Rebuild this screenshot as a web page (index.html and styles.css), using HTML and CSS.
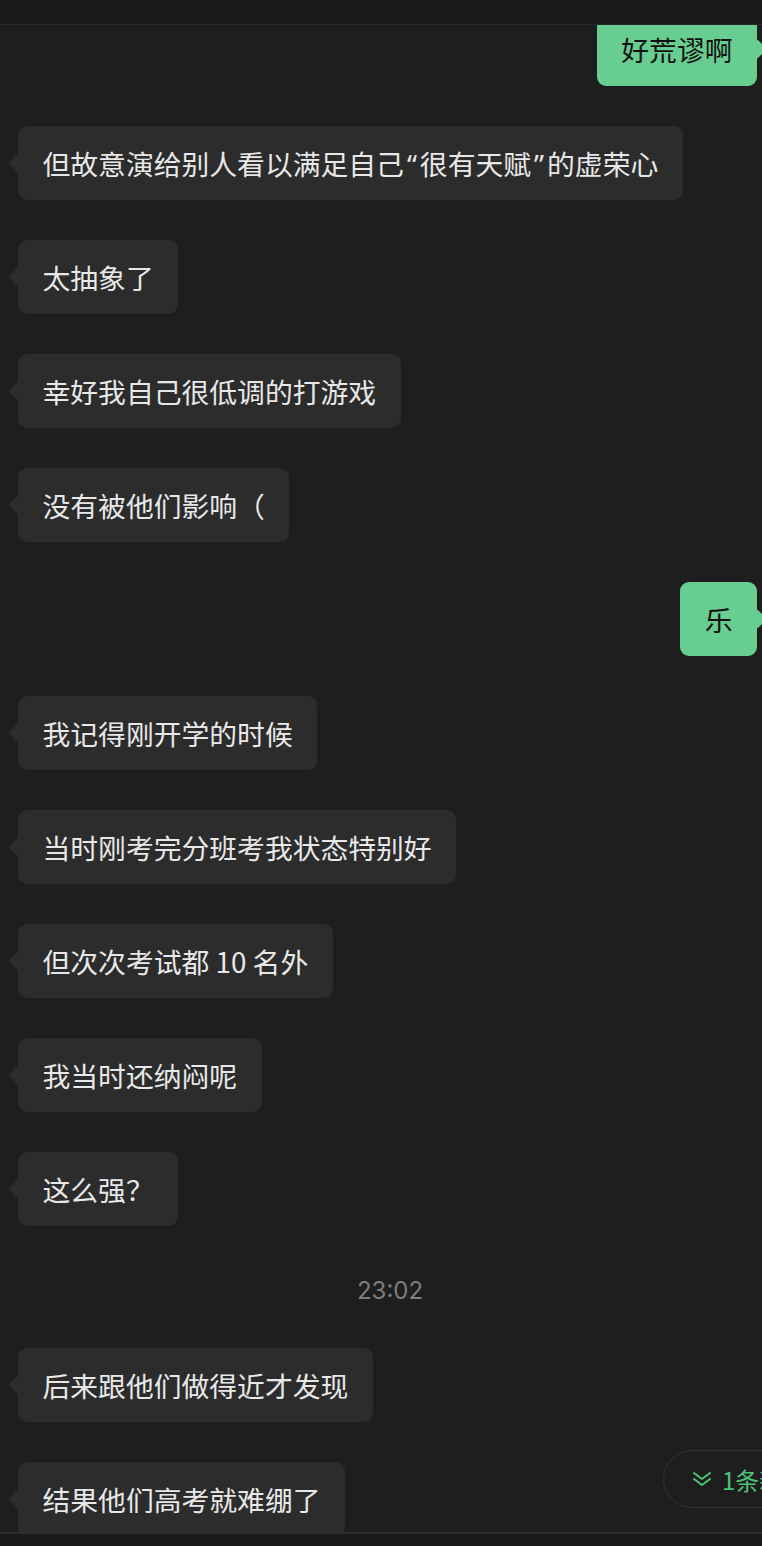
FILE: index.html
```html
<!DOCTYPE html>
<html lang="zh-CN">
<head>
  <meta charset="UTF-8">
  <meta name="viewport" content="width=device-width, initial-scale=1.0">
  <title>聊天记录</title>
  <link rel="stylesheet" href="styles.css">
</head>
<body>
  <div class="chat-window">
    <div class="top-bar"></div>

    <div class="chat-body">
      <div class="message-list">
        <div class="bubble mine">好荒谬啊</div>
        <div class="bubble theirs">但故意演给别人看以满足自己<span class="quote">“</span>很有天赋<span class="quote">”</span>的虚荣心</div>
        <div class="bubble theirs">太抽象了</div>
        <div class="bubble theirs">幸好我自己很低调的打游戏</div>
        <div class="bubble theirs">没有被他们影响（</div>
        <div class="bubble mine">乐</div>
        <div class="bubble theirs">我记得刚开学的时候</div>
        <div class="bubble theirs">当时刚考完分班考我状态特别好</div>
        <div class="bubble theirs">但次次考试都 10 名外</div>
        <div class="bubble theirs">我当时还纳闷呢</div>
        <div class="bubble theirs">这么强？</div>
        <div class="timestamp">23:02</div>
        <div class="bubble theirs">后来跟他们做得近才发现</div>
        <div class="bubble theirs">结果他们高考就难绷了</div>
      </div>

      <!-- new message hint -->
      <div class="new-hint">
        <svg class="hint-icon" viewBox="0 0 20 20" width="20" height="20">
          <path d="M2 4 L10 10 L18 4" fill="none" stroke="#4cc277" stroke-width="2" stroke-linecap="round" stroke-linejoin="round"/>
          <path d="M2 10 L10 16 L18 10" fill="none" stroke="#4cc277" stroke-width="2" stroke-linecap="round" stroke-linejoin="round"/>
        </svg>
        <span>1条新消息</span>
      </div>
    </div>

    <div class="bottom-bar"></div>
  </div>
</body>
</html>
```

FILE: styles.css
```css
/* Chat window */
body {
  margin: 0;
  background: #1b1b1b;
  font-family: "Noto Sans CJK SC", "Noto Sans", sans-serif;
}

.chat-window {
  width: 762px;
  height: 1546px;
  display: flex;
  flex-direction: column;
  overflow: hidden;
}

.top-bar {
  height: 24px;
  flex-shrink: 0;
  background: #1b1b1b;
  border-bottom: 1px solid #2a2a2a;
}

.chat-body {
  position: relative;
  height: 1507px;
  flex-shrink: 0;
  background: #1e1e1e;
  overflow: hidden;
}

.message-list {
  display: flex;
  flex-direction: column;
  gap: 40px;
  margin-top: -13px;
}

.bubble {
  position: relative;
  height: 38px;
  padding: 18px 24.5px;
  font-size: 27.8px;
  line-height: 38px;
  border-radius: 9px;
  white-space: nowrap;
}

.bubble::before {
  content: "";
  position: absolute;
  top: calc(50% - 7px);
  width: 14px;
  height: 14px;
  border-radius: 2px;
  transform: rotate(45deg);
  background: inherit;
}

.quote {
  font-family: "Noto Sans", sans-serif;
  padding: 0 3px;
}

.theirs {
  align-self: flex-start;
  margin-left: 18px;
  background: #2c2c2c;
  color: #e8e8e8;
}

.theirs::before {
  left: -7px;
}

.mine {
  align-self: flex-end;
  margin-right: 5px;
  background: #67cd91;
  color: #121212;
}

.mine::before {
  right: -7px;
}

.timestamp {
  height: 35px;
  padding: 7px 0 0 18px;
  text-align: center;
  font-family: "Inter", "Liberation Sans", sans-serif;
  font-size: 24px;
  line-height: 35px;
  color: #7e7e7e;
}

/* floating hint */
.new-hint {
  position: absolute;
  left: 663px;
  top: 1425px;
  width: 160px;
  height: 58px;
  display: flex;
  align-items: center;
  gap: 10px;
  padding-left: 28px;
  border: 1px solid #333333;
  border-radius: 30px;
  background: #1e1e1e;
  box-sizing: border-box;
  color: #4cc277;
  font-size: 24px;
  white-space: nowrap;
}

.hint-icon {
  flex-shrink: 0;
}

.bottom-bar {
  flex: 1;
  background: #1b1b1b;
  border-top: 2px solid #2c2c2c;
}
```
